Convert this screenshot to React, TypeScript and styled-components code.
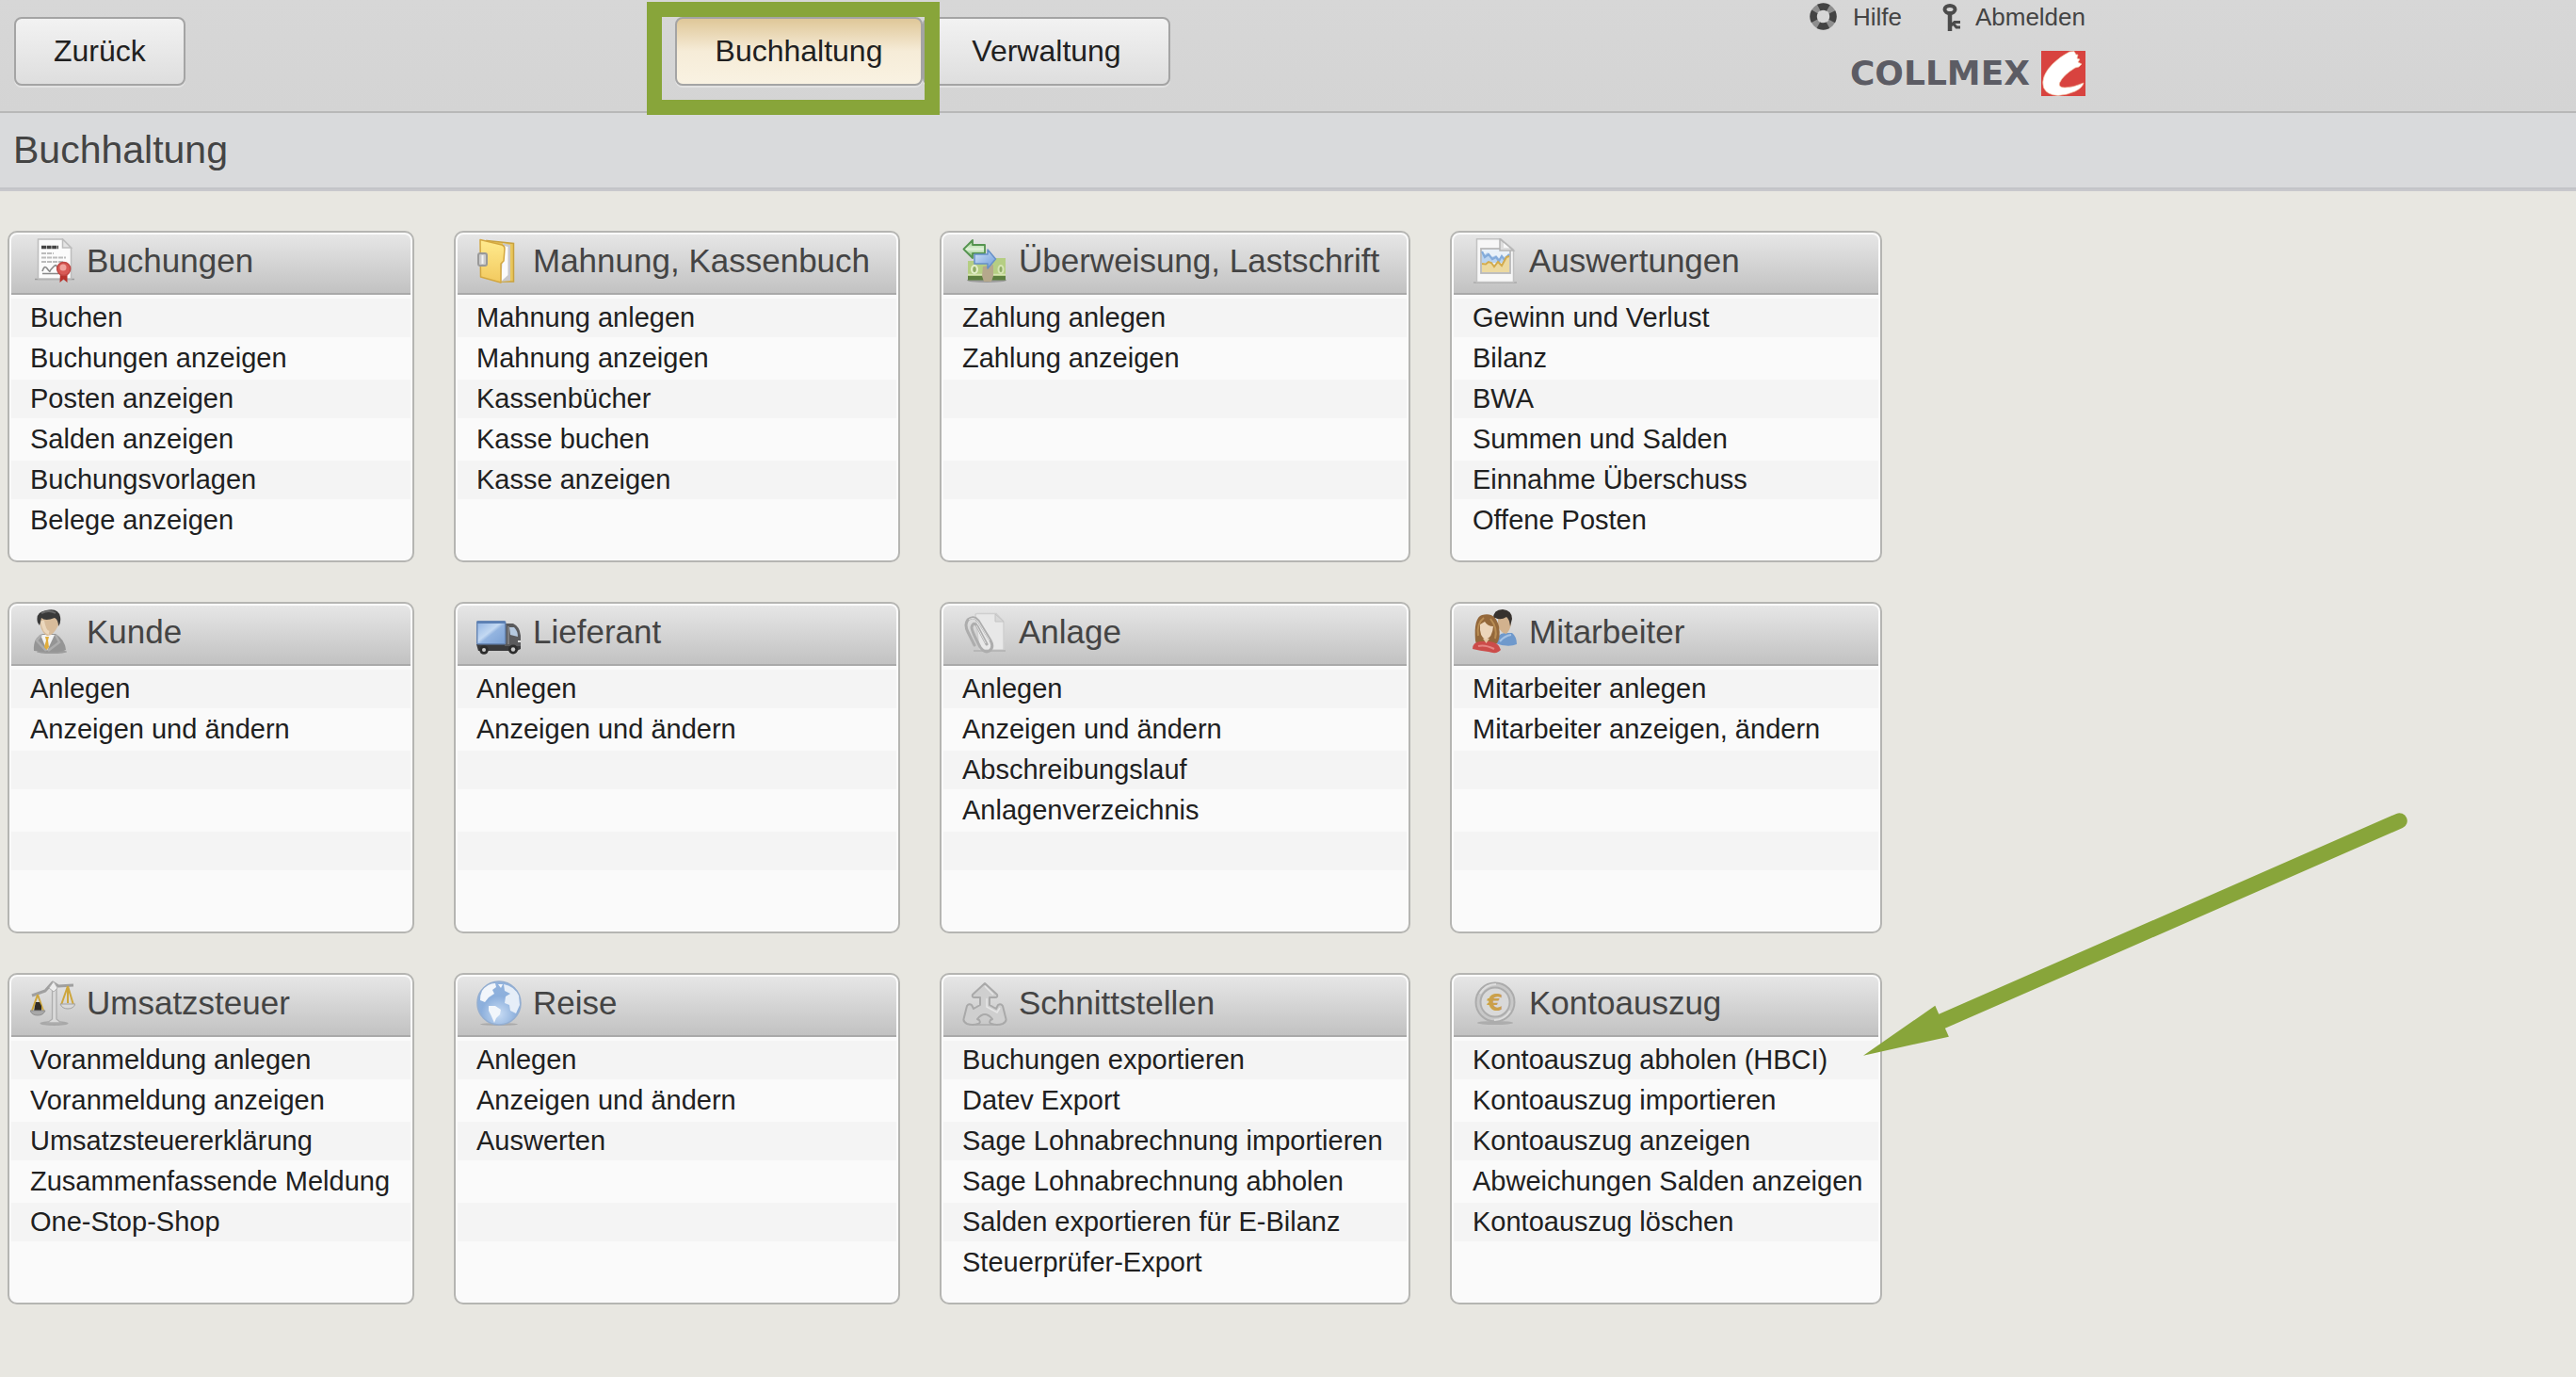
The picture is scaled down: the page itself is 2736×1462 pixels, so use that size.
import React from "react";
import styled, { createGlobalStyle } from "styled-components";

const GlobalStyle = createGlobalStyle`
  *, *::before, *::after { box-sizing: border-box; }
  body {
    margin: 0;
    background: #e8e7e1;
    color: #202020;
    font-family: "Liberation Sans", Arial, Helvetica, sans-serif;
  }
  h1, h2, ul { margin: 0; padding: 0; font-weight: normal; }
  ul { list-style: none; }
  a { color: inherit; text-decoration: none; }
`;

const accent = "#88a53a";

/* ---------- header ---------- */

const Header = styled.header`
  border-bottom: 2px solid #b8b8b8;
  background: linear-gradient(#d7d7d7, #d4d4d4);
`;

const HeaderInner = styled.div`
  display: grid;
  grid-template-columns: 702fr 526px 972fr;
  max-width: 2231px;
  height: 118px;
  padding: 0 16px 0 15px;
`;

const HeaderZone = styled.div`
  padding-top: 18px;
`;

const Tabs = styled.nav`
  display: flex;
  align-items: flex-start;
  padding-top: 18px;
`;

const TabSlot = styled.div`
  position: relative;
  flex: 1;
`;

const HeaderButton = styled.button<{ $wide?: boolean; $active?: boolean }>`
  display: block;
  width: ${(p) => (p.$wide ? "100%" : "auto")};
  height: 73px;
  padding: 0 40px;
  border: 2px solid #a4a4a4;
  border-radius: 8px;
  background: ${(p) =>
    p.$active
      ? "linear-gradient(#dfc798, #f6ecd8 50%, #f9f2e2)"
      : "linear-gradient(#f2f2f2, #dedede)"};
  box-shadow: 0 2px 0 #e2e2e2;
  color: #202020;
  font: 32px "Liberation Sans", Arial, sans-serif;
  cursor: pointer;
`;

const Highlight = styled.div`
  position: absolute;
  z-index: 1;
  top: -16px;
  right: -18px;
  bottom: -31px;
  left: -30px;
  border: 16px solid ${accent};
  pointer-events: none;
`;

const UserArea = styled.div`
  display: flex;
  flex-direction: column;
  align-items: flex-end;
  gap: 18px;
  padding-top: 4px;
`;

const UserLinks = styled.div`
  display: flex;
  gap: 32px;
`;

const UserLink = styled.a`
  display: flex;
  align-items: center;
  gap: 16px;
  height: 32px;
  padding-bottom: 4px;
  color: #444;
  font-size: 26px;
  line-height: 30px;
`;

const Brand = styled.a`
  display: flex;
  align-items: center;
  gap: 12px;
  color: #5c5c64;
  font: bold 36px/48px "DejaVu Sans", sans-serif;
`;

const TitleBar = styled.div`
  padding: 0 14px;
  border-bottom: 2px solid #c8c8cc;
  background: #d9dadc;
  box-shadow: inset 0 -2px 0 #c3c4c8;
`;

const Title = styled.h1`
  padding-bottom: 2px;
  color: #444;
  font-size: 41px;
  line-height: 79px;
`;

/* ---------- cards ---------- */

const Board = styled.main`
  display: grid;
  grid-template-columns:
    minmax(0, 432fr) minmax(0, 474fr) minmax(0, 500fr) minmax(0, 459fr);
  gap: 42px;
  max-width: 2007px;
  padding: 42px 8px;
`;

const CardSlot = styled.div`
  position: relative;
`;

const Card = styled.section`
  padding: 2px 2px 18px;
  border: 2px solid #b5b5b2;
  border-radius: 10px;
  background: #fafafa;
`;

const CardHead = styled.div`
  display: flex;
  align-items: center;
  gap: 12px;
  height: 64px;
  padding: 0 20px 6px;
  border-bottom: 2px solid #a9a9a9;
  border-radius: 6px 6px 0 0;
  background: linear-gradient(#e6e6e6, #c2c2c2);
`;

const CardTitle = styled.h2`
  color: #444;
  font-size: 35px;
  line-height: 56px;
  white-space: nowrap;
`;

const Entries = styled.ul`
  padding: 4px 0 2px;
`;

const Entry = styled.li`
  height: 41px;
  margin-bottom: 2px;
  padding: 0 20px;
  font-size: 29px;
  line-height: 41px;
  white-space: nowrap;

  &:nth-child(odd) {
    background: #f4f4f4;
  }
`;

const ArrowMark = styled.svg`
  position: absolute;
  z-index: 1;
  top: -183px;
  left: calc(100% - 29px);
  pointer-events: none;
`;

const IconSvg = styled.svg`
  flex: none;
`;

/* ---------- icons ---------- */

const Icon = ({ children }: { children: React.ReactNode }) => (
  <IconSvg width="48" height="48" viewBox="0 0 48 48" fill="none" aria-hidden="true">
    {children}
  </IconSvg>
);

const DocumentIcon = () => (
  <Icon>
    <path d="M5 43.5H47" stroke="#9a9a9a" strokeWidth="1.5" />
    <path d="M8.5 1H34.5L43.5 10V43H8.5Z" fill="#fbfbfb" stroke="#bdbdbd" strokeWidth="1.5" />
    <path d="M34.5 1V10H43.5Z" fill="#e4e4e4" stroke="#bdbdbd" strokeWidth="1.5" />
    <path d="M12 9.5H30" stroke="#444" strokeWidth="3.5" strokeDasharray="5 .6" />
    <path d="M12 16H25M12 20.5H38M12 25H36" stroke="#bcbcbc" strokeWidth="2" strokeDasharray="5 1" />
    <path d="M13 35Q15 28 18 32T21 35T25 30T29 34M13 37.5H30" stroke="#888" strokeWidth="1.6" />
    <path d="M32 36L31.5 47L35.5 43.5L39.5 47L39.5 36Z" fill="#b8322c" />
    <circle cx="35.7" cy="32.5" r="7" fill="#d85a55" stroke="#c04743" strokeWidth="1.5" />
    <circle cx="35" cy="31" r="3.5" fill="#f0a39d" />
  </Icon>
);

const FolderIcon = () => (
  <Icon>
    <path d="M11 2.5L39.5 5.5V46H25Z" fill="#e9c65c" stroke="#c9a23f" strokeWidth="1.5" />
    <path d="M28 5L36 7V45L25 46Z" fill="#c9c9cc" />
    <path d="M29 8L33.5 9V39L26 46Z" fill="#fbfbfb" />
    <path d="M4 1.5L27 7Q30 8 30 11L29 24L26 27V47L4.5 41Z" fill="url(#folderFront)" stroke="#d3a73f" strokeWidth="1.5" strokeLinejoin="round" />
    <rect x="2" y="16" width="9" height="13" rx="2" fill="#ccc" stroke="#999" strokeWidth="2" />
    <path d="M6.5 18V27" stroke="#f2f2f2" strokeWidth="2" />
    <defs>
      <linearGradient id="folderFront" x1="0" y1="0" x2="0" y2="1">
        <stop stopColor="#ffeb8e" />
        <stop offset="1" stopColor="#f2c95f" />
      </linearGradient>
    </defs>
  </Icon>
);

const TransferIcon = () => (
  <Icon>
    <ellipse cx="26" cy="44.5" rx="21" ry="2.5" fill="#9b9b9b" />
    <path d="M6 24H34V21H46V43H6Z" fill="#b5ce83" />
    <path d="M6 40H46V44.5H6Z" fill="#5d7f3f" />
    <path d="M6 38.5H46" stroke="#d5e3b3" strokeWidth="1.5" />
    <ellipse cx="13" cy="33" rx="4" ry="5" fill="#e4eec9" />
    <ellipse cx="13" cy="33" rx="1.8" ry="3" fill="#8fab66" />
    <ellipse cx="41" cy="33" rx="3.5" ry="5" fill="#d6e5b3" />
    <ellipse cx="41" cy="33" rx="1.5" ry="3" fill="#8fab66" />
    <path d="M22 30L33 28V40L31 46H23L21 40Z" fill="#b5a88c" />
    <path d="M1.5 11.500L11 2V7H24V16H11V21Z" fill="url(#transferBack)" stroke="#559450" strokeWidth="1.800" strokeLinejoin="round" />
    <path d="M35.500 22L27 12V17H13V27H27V32Z" fill="url(#transferOut)" stroke="#6690c8" strokeWidth="1.500" strokeLinejoin="round" />
    <defs>
      <linearGradient id="transferBack" x1="0" y1="0" x2="0" y2="1">
        <stop stopColor="#8cc47f" />
        <stop offset=".5" stopColor="#e2f3da" />
        <stop offset="1" stopColor="#67ab5b" />
      </linearGradient>
      <linearGradient id="transferOut" x1="0" y1="0" x2="1" y2="1">
        <stop stopColor="#d3e4f9" />
        <stop offset="1" stopColor="#6c9ad8" />
      </linearGradient>
    </defs>
  </Icon>
);

const ChartIcon = () => (
  <Icon>
    <path d="M1 47H47" stroke="#aaa" strokeWidth="1.5" />
    <path d="M4.5 .8H30L43.5 12V46.5H4.5Z" fill="#f7f7f7" stroke="#c2c2c2" strokeWidth="1.5" />
    <rect x="9" y="11" width="31" height="26" fill="#e9f1f8" stroke="#b9b9b9" strokeWidth="1.8" />
    <path d="M10 14L13 17L16 15L20 20L25 18L29 22L33 20L38 17V26H10Z" fill="#b9d3ef" />
    <path d="M10 14L13 20L17 17L21 22L25 20L28 24L31 19L34 23L39 17" stroke="#83abda" strokeWidth="2.2" />
    <path d="M10 27L14 27.5L17 25L20 26L23 30L27 25L31 29L36 20L39 20V36H10Z" fill="#ecd9a0" />
    <path d="M10 27L14 27.5L17 25L20 26L23 30L27 25L31 29L36 20L39 19" stroke="#d3ab4c" strokeWidth="2" />
    <path d="M29 .8V13H43.5Z" fill="#dedede" stroke="#b5b5b5" strokeWidth="1.5" />
    <path d="M33 5V10H39Z" fill="#f8f8f8" />
  </Icon>
);

const CustomerIcon = () => (
  <Icon>
    <ellipse cx="23" cy="45" rx="16" ry="2" fill="#9c9c9c" />
    <path d="M4 44Q3 30 13 26H27Q37 32 38 43Q30 47 4 44Z" fill="#959595" />
    <path d="M11 27L18 44L26 27Z" fill="#f3f3f3" />
    <path d="M12 27L7 33L17 44M27 27L31 35L19 44" stroke="#adadad" strokeWidth="2.5" />
    <path d="M16 29H20L19 33L20 40L17.5 43L15 40L17 33Z" fill="#e0ad3c" />
    <path d="M10 8Q10 24 18 28Q24 29 30 17V7H14Z" fill="#d8bc9b" />
    <path d="M13 12Q15 24 20 25" stroke="#ebd7bd" strokeWidth="4" />
    <path d="M8 14Q5 3 17 1Q30-2 32 8Q33 14 30 18Q30 11 26 9Q16 13 12 9Q11 14 10 17Z" fill="#393939" />
    <path d="M12 4Q20 0 27 4" stroke="#686868" strokeWidth="2" />
  </Icon>
);

const TruckIcon = () => (
  <Icon>
    <path d="M0 37H47V42L43 44H2Z" fill="#3a3a3c" />
    <path d="M30 15H39Q46 18 47 28V39H30Z" fill="#5a5a5c" />
    <path d="M35 19H40Q44 23 44 29L36 27Z" fill="#b6c9df" />
    <path d="M34 18V37" stroke="#8a8a8c" strokeWidth="1.5" />
    <rect x="0.7" y="12.7" width="30" height="24" rx="1" fill="url(#truckBox)" stroke="#6685b3" strokeWidth="1.500" />
    <path d="M1 14H31" stroke="#5c80b4" strokeWidth="2" />
    <circle cx="8" cy="43" r="4.800" fill="#2c2c2c" />
    <circle cx="8" cy="43" r="2" fill="#c9c9c9" />
    <circle cx="39" cy="42.500" r="5" fill="#2c2c2c" />
    <circle cx="39" cy="42.500" r="2.200" fill="#c9c9c9" />
    <path d="M44 34H47" stroke="#ddd" strokeWidth="2" />
    <defs>
      <linearGradient id="truckBox" x1="0" y1="0" x2="1" y2="1">
        <stop stopColor="#8fb2e2" />
        <stop offset=".45" stopColor="#c4d9f2" />
        <stop offset=".55" stopColor="#93b4e0" />
        <stop offset="1" stopColor="#7ba0d4" />
      </linearGradient>
    </defs>
  </Icon>
);

const ClipIcon = () => (
  <Icon>
    <path d="M14 6Q14 4.5 16 4.5H36L44 13V43H18Z" fill="#e8e8e8" stroke="#cfcfcf" strokeWidth="1.5" />
    <path d="M35 5V13H44Z" fill="#d8d8d8" stroke="#c4c4c4" strokeWidth="1" />
    <path d="M12 44H46" stroke="#b1b1b1" strokeWidth="1.5" />
    <path d="M26 37L16 18Q12 12 10 19Q10 23 19 40Q24 47 29 44Q34 40 30 33L17 12Q12 6 6 11Q2 16 6 24L13 38" stroke="#adadad" strokeWidth="3" strokeLinecap="round" />
    <path d="M25 36L15 17M29 33L17 13Q12 7 7 11" stroke="#dedede" strokeWidth="1" />
  </Icon>
);

const PeopleIcon = () => (
  <Icon>
    <path d="M24 36Q26 26 34 25H42Q47 29 47 37Q38 41 24 36Z" fill="#6f99cc" />
    <path d="M29 34Q34 28 41 27" stroke="#a5c3e6" strokeWidth="2" />
    <path d="M27 8L40 7Q43 19 36 26Q30 25 27 18Z" fill="#d2b28e" />
    <path d="M22 10Q22 0 32 0Q42 1 42 10L40 18Q39 10 36 8Q30 12 24 9Z" fill="#37322e" />
    <path d="M3 33Q1 9 10 6Q24 2 28 18Q30 30 26 36L18 38L4 37Z" fill="#94683b" />
    <path d="M0 42Q0 35 8 34H18Q28 35 30 43Q26 48 17 45Q8 44 0 42Z" fill="#cc4c4a" />
    <path d="M11 31L14.5 36L18 31Z" fill="#e3c6a5" />
    <path d="M6 39Q13 37 23 42" stroke="#e58583" strokeWidth="2" />
    <path d="M8 16Q7 29 14 32Q21 30 22 18Q16 18 13 13Z" fill="#ecd5bb" />
    <path d="M6 28Q4 15 12 9M24 31Q27 20 19 10" stroke="#b98d54" strokeWidth="2" />
  </Icon>
);

const ScaleIcon = () => (
  <Icon>
    <ellipse cx="25.5" cy="45.500" rx="15" ry="2.500" fill="#a8a8a8" />
    <path d="M23.5 8H28V41L33 45H18L23.5 41Z" fill="#dadada" stroke="#adadad" strokeWidth="1.3" />
    <path d="M2 16L16 11L24 2L30 6L46 5" stroke="#a0a0a0" strokeWidth="3" strokeLinejoin="round" />
    <path d="M20 8L25 1L29 8L25 12Z" fill="#ededed" stroke="#b2b2b2" />
    <path d="M8 15L2 32M8 15L14 32M40 6L33 26M40 6L46 26M40 6V24" stroke="#cda63d" strokeWidth="2" />
    <path d="M5 27L6 23H10L12 27V33H4Z" fill="#2f2b25" />
    <path d="M0 32H16Q14 37 8 37Q2 37 0 32Z" fill="#a8a8a8" stroke="#8f8f8f" />
    <path d="M32 25H48Q46 30 40 30Q34 30 32 25Z" fill="#d9d9d9" stroke="#a2a2a2" />
  </Icon>
);

const GlobeIcon = () => (
  <Icon>
    <ellipse cx="24" cy="46.5" rx="20" ry="1.5" fill="#aaa" />
    <circle cx="24" cy="24" r="23" fill="url(#globeSea)" stroke="#94aed0" strokeWidth="1.5" />
    <path d="M6 11Q12 3 20 3L21 7L17 10L19 14L13 18L9 23L4 21Q4 15 6 11Z" fill="#f2f6fb" />
    <path d="M13 27L20 27L26 31L25 36L21 40L19 45L16 38L13 32Z" fill="#f2f6fb" />
    <path d="M29 4Q40 6 45 16L46 26L42 35L36 32L35 26L30 24L31 17L36 14L30 11Z" fill="#e6eef8" />
    <path d="M23 4L28 4L26 8Z" fill="#f2f6fb" />
    <defs>
      <radialGradient id="globeSea" cx=".5" cy=".75" r=".75">
        <stop stopColor="#c8dcf4" />
        <stop offset=".55" stopColor="#8cafdc" />
        <stop offset="1" stopColor="#92b3dd" />
      </radialGradient>
    </defs>
  </Icon>
);

const ConnectIcon = () => (
  <Icon>
    <path
      d="M24 3L37 15Q38 18 35 18H29V26L36 30L38 26Q41 24 43 27L46.5 41Q47 44 43 46Q37 48 31 46Q28 45 30 42L32 41Q28 36 24 36Q20 36 16 41L18 42Q20 45 17 46Q11 48 5 46Q1 44 1.5 41L5 27Q7 24 10 26L12 30L19 26V18H13Q10 18 11 15Z"
      fill="#cfcfcf"
      stroke="#a9a9a9"
      strokeWidth="2"
      strokeLinejoin="round"
    />
    <path d="M24 6L33 15M26 19V28L37 34L40 29" stroke="#e6e6e6" strokeWidth="1.5" />
    <path d="M14 47H34" stroke="#aaa" strokeWidth="1.5" />
  </Icon>
);

const CoinIcon = () => (
  <Icon>
    <ellipse cx="24" cy="45" rx="19" ry="2" fill="#adadad" />
    <circle cx="24" cy="23" r="20.5" fill="#c8c8c8" stroke="#acacac" strokeWidth="2" />
    <circle cx="24" cy="23" r="15.500" fill="#d9d9d9" stroke="#adadad" strokeWidth="2" />
    <path d="M8 14Q14 4 25 4M40 32Q34 42 23 42" stroke="#dedede" strokeWidth="2" />
    <text x="24" y="32" textAnchor="middle" fontFamily="DejaVu Sans, sans-serif" fontWeight="bold" fontSize="24" fill="#cba04a">€</text>
  </Icon>
);

const HelpIcon = () => (
  <IconSvg width="30" height="30" viewBox="0 0 30 30" fill="none" aria-hidden="true">
    <circle cx="14.5" cy="14.5" r="10.5" stroke="#8e8e8e" strokeWidth="7" />
    <circle cx="14.5" cy="14.5" r="10.5" stroke="#434343" strokeWidth="7.5" strokeDasharray="10.5 6" strokeDashoffset="5.25" />
  </IconSvg>
);

const KeyIcon = () => (
  <IconSvg width="30" height="30" viewBox="0 0 30 30" fill="none" aria-hidden="true">
    <ellipse cx="19" cy="7" rx="5.5" ry="4" stroke="#4b4b4b" strokeWidth="4" />
    <path d="M19 10V30" stroke="#4b4b4b" strokeWidth="4.5" />
    <path d="M20 24L24 20.5H30M23 22.5L26 26H30" stroke="#4b4b4b" strokeWidth="3" />
  </IconSvg>
);

const BrandMark = () => (
  <IconSvg width="47" height="48" viewBox="0 0 47 48" aria-hidden="true">
    <rect width="47" height="48" fill="#d8433f" />
    <path
      d="M30 1L35 .5L37 4L39 4L38 8L41 9L39 12L43 14L40 17L36 18Q23 26 19.5 34Q18 39 25 39Q34 39 45 34Q44 39 36 43Q27 47 18 47.500Q6 47 2.500 39Q-1 27 12 14Q20 6 30 1Z"
      fill="#fff"
      stroke="#f3c6a8"
      strokeWidth=".7"
    />
  </IconSvg>
);

/* ---------- content ---------- */

type CardData = {
  title: string;
  icon: React.ComponentType;
  entries: string[];
  marked?: boolean;
};

const ROWS = 6;

const cards: CardData[] = [
  {
    title: "Buchungen",
    icon: DocumentIcon,
    entries: ["Buchen", "Buchungen anzeigen", "Posten anzeigen", "Salden anzeigen", "Buchungsvorlagen", "Belege anzeigen"],
  },
  {
    title: "Mahnung, Kassenbuch",
    icon: FolderIcon,
    entries: ["Mahnung anlegen", "Mahnung anzeigen", "Kassenbücher", "Kasse buchen", "Kasse anzeigen"],
  },
  { title: "Überweisung, Lastschrift", icon: TransferIcon, entries: ["Zahlung anlegen", "Zahlung anzeigen"] },
  {
    title: "Auswertungen",
    icon: ChartIcon,
    entries: ["Gewinn und Verlust", "Bilanz", "BWA", "Summen und Salden", "Einnahme Überschuss", "Offene Posten"],
  },
  { title: "Kunde", icon: CustomerIcon, entries: ["Anlegen", "Anzeigen und ändern"] },
  { title: "Lieferant", icon: TruckIcon, entries: ["Anlegen", "Anzeigen und ändern"] },
  {
    title: "Anlage",
    icon: ClipIcon,
    entries: ["Anlegen", "Anzeigen und ändern", "Abschreibungslauf", "Anlagenverzeichnis"],
  },
  { title: "Mitarbeiter", icon: PeopleIcon, entries: ["Mitarbeiter anlegen", "Mitarbeiter anzeigen, ändern"] },
  {
    title: "Umsatzsteuer",
    icon: ScaleIcon,
    entries: ["Voranmeldung anlegen", "Voranmeldung anzeigen", "Umsatzsteuererklärung", "Zusammenfassende Meldung", "One-Stop-Shop"],
  },
  { title: "Reise", icon: GlobeIcon, entries: ["Anlegen", "Anzeigen und ändern", "Auswerten"] },
  {
    title: "Schnittstellen",
    icon: ConnectIcon,
    entries: [
      "Buchungen exportieren",
      "Datev Export",
      "Sage Lohnabrechnung importieren",
      "Sage Lohnabrechnung abholen",
      "Salden exportieren für E-Bilanz",
      "Steuerprüfer-Export",
    ],
  },
  {
    title: "Kontoauszug",
    icon: CoinIcon,
    entries: [
      "Kontoauszug abholen (HBCI)",
      "Kontoauszug importieren",
      "Kontoauszug anzeigen",
      "Abweichungen Salden anzeigen",
      "Kontoauszug löschen",
    ],
    marked: true,
  },
];

const MenuCard = ({ title, icon: CardIcon, entries, marked }: CardData) => (
  <CardSlot>
    <Card>
      <CardHead>
        <CardIcon />
        <CardTitle>{title}</CardTitle>
      </CardHead>
      <Entries>
        {Array.from({ length: ROWS }, (_, i) => (
          <Entry key={i} aria-hidden={entries[i] ? undefined : true}>
            {entries[i] && <a href="#">{entries[i]}</a>}
          </Entry>
        ))}
      </Entries>
    </Card>
    {marked && (
      <ArrowMark width="600" height="280" viewBox="0 0 600 280" aria-hidden="true">
        <path d="M92 234.5L578.5 21.5" stroke={accent} strokeWidth="16.5" strokeLinecap="round" />
        <path d="M9 270.7L85.3 217.7L99.9 250.7Z" fill={accent} />
      </ArrowMark>
    )}
  </CardSlot>
);

export default function App() {
  return (
    <>
      <GlobalStyle />
      <Header>
        <HeaderInner>
          <HeaderZone>
            <HeaderButton type="button">Zurück</HeaderButton>
          </HeaderZone>
          <Tabs>
            <TabSlot>
              <HeaderButton type="button" $wide $active aria-current="page">
                Buchhaltung
              </HeaderButton>
              <Highlight />
            </TabSlot>
            <TabSlot>
              <HeaderButton type="button" $wide>
                Verwaltung
              </HeaderButton>
            </TabSlot>
          </Tabs>
          <UserArea>
            <UserLinks>
              <UserLink href="#">
                <HelpIcon />
                Hilfe
              </UserLink>
              <UserLink href="#">
                <KeyIcon />
                Abmelden
              </UserLink>
            </UserLinks>
            <Brand href="#">
              COLLMEX
              <BrandMark />
            </Brand>
          </UserArea>
        </HeaderInner>
      </Header>
      <TitleBar>
        <Title>Buchhaltung</Title>
      </TitleBar>
      <Board>
        {cards.map((card) => (
          <MenuCard key={card.title} {...card} />
        ))}
      </Board>
    </>
  );
}
